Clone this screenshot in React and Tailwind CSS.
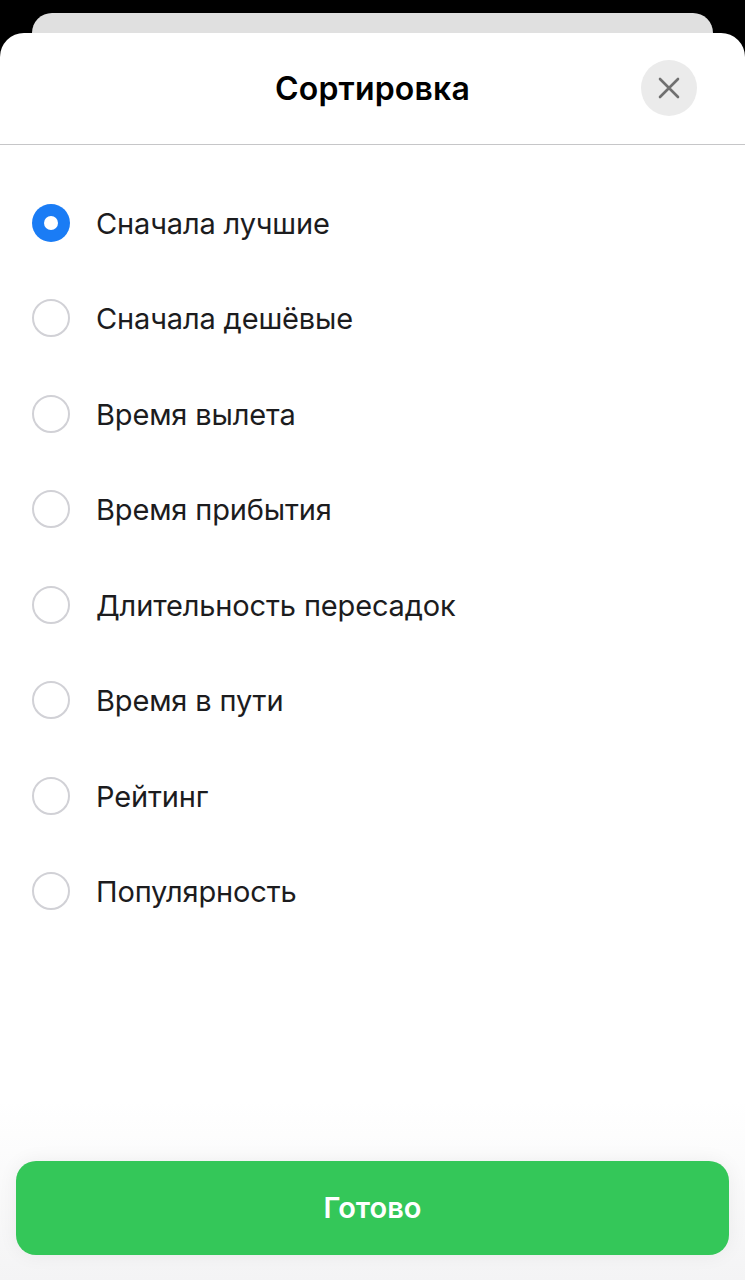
const options = [
  "Сначала лучшие",
  "Сначала дешёвые",
  "Время вылета",
  "Время прибытия",
  "Длительность пересадок",
  "Время в пути",
  "Рейтинг",
  "Популярность",
];

function Radio({ checked }) {
  if (checked) {
    return (
      <span className="flex h-[38px] w-[38px] shrink-0 items-center justify-center rounded-full bg-[#1a7cf5]">
        <span className="h-[14px] w-[14px] rounded-full bg-white" />
      </span>
    );
  }
  return (
    <span className="h-[38px] w-[38px] shrink-0 rounded-full border-2 border-[#d1d1d6] bg-white" />
  );
}

export default function App() {
  return (
    <div
      className="flex h-[1280px] w-[745px] flex-col overflow-hidden bg-black"
      style={{ fontFamily: "Inter, 'Noto Sans', sans-serif" }}
    >
      <div className="mx-[32px] mt-[13px] h-[40px] shrink-0 rounded-t-[20px] bg-[#e0e0e0]" />
      <div className="-mt-[20px] flex flex-1 flex-col rounded-t-[24px] bg-white">
        <header className="relative flex h-[112px] shrink-0 items-center justify-center border-b border-[#c6c6c8]">
          <h1 className="text-[32px] font-semibold tracking-[0.2px] text-black">
            Сортировка
          </h1>
          <button
            type="button"
            className="absolute right-[48px] top-[27px] flex h-[56px] w-[56px] items-center justify-center rounded-full bg-[#ebebeb]"
          >
            <svg width="24" height="24" viewBox="0 0 24 24" fill="none">
              <path
                d="M3 3L21 21M21 3L3 21"
                stroke="#707070"
                strokeWidth="2.6"
                strokeLinecap="round"
              />
            </svg>
          </button>
        </header>
        <ul className="flex flex-col pt-[30px]">
          {options.map((label, i) => (
            <li
              key={label}
              className="flex h-[95.5px] items-center gap-[26px] pl-[32px]"
            >
              <Radio checked={i === 0} />
              <span className="pt-[1px] text-[29px] tracking-[-0.15px] text-[#1c1c1e]">
                {label}
              </span>
            </li>
          ))}
        </ul>
        <div className="flex-1" />
        <div className="bg-gradient-to-b from-white to-[#f4f4f5] px-[16px] pb-[25px] pt-[60px]">
          <button
            type="button"
            className="flex h-[94px] w-full items-center justify-center rounded-[20px] bg-[#34c759] text-[29px] font-semibold text-white shadow-[0_0_20px_rgba(0,0,0,0.06)]"
          >
            Готово
          </button>
        </div>
      </div>
    </div>
  );
}
